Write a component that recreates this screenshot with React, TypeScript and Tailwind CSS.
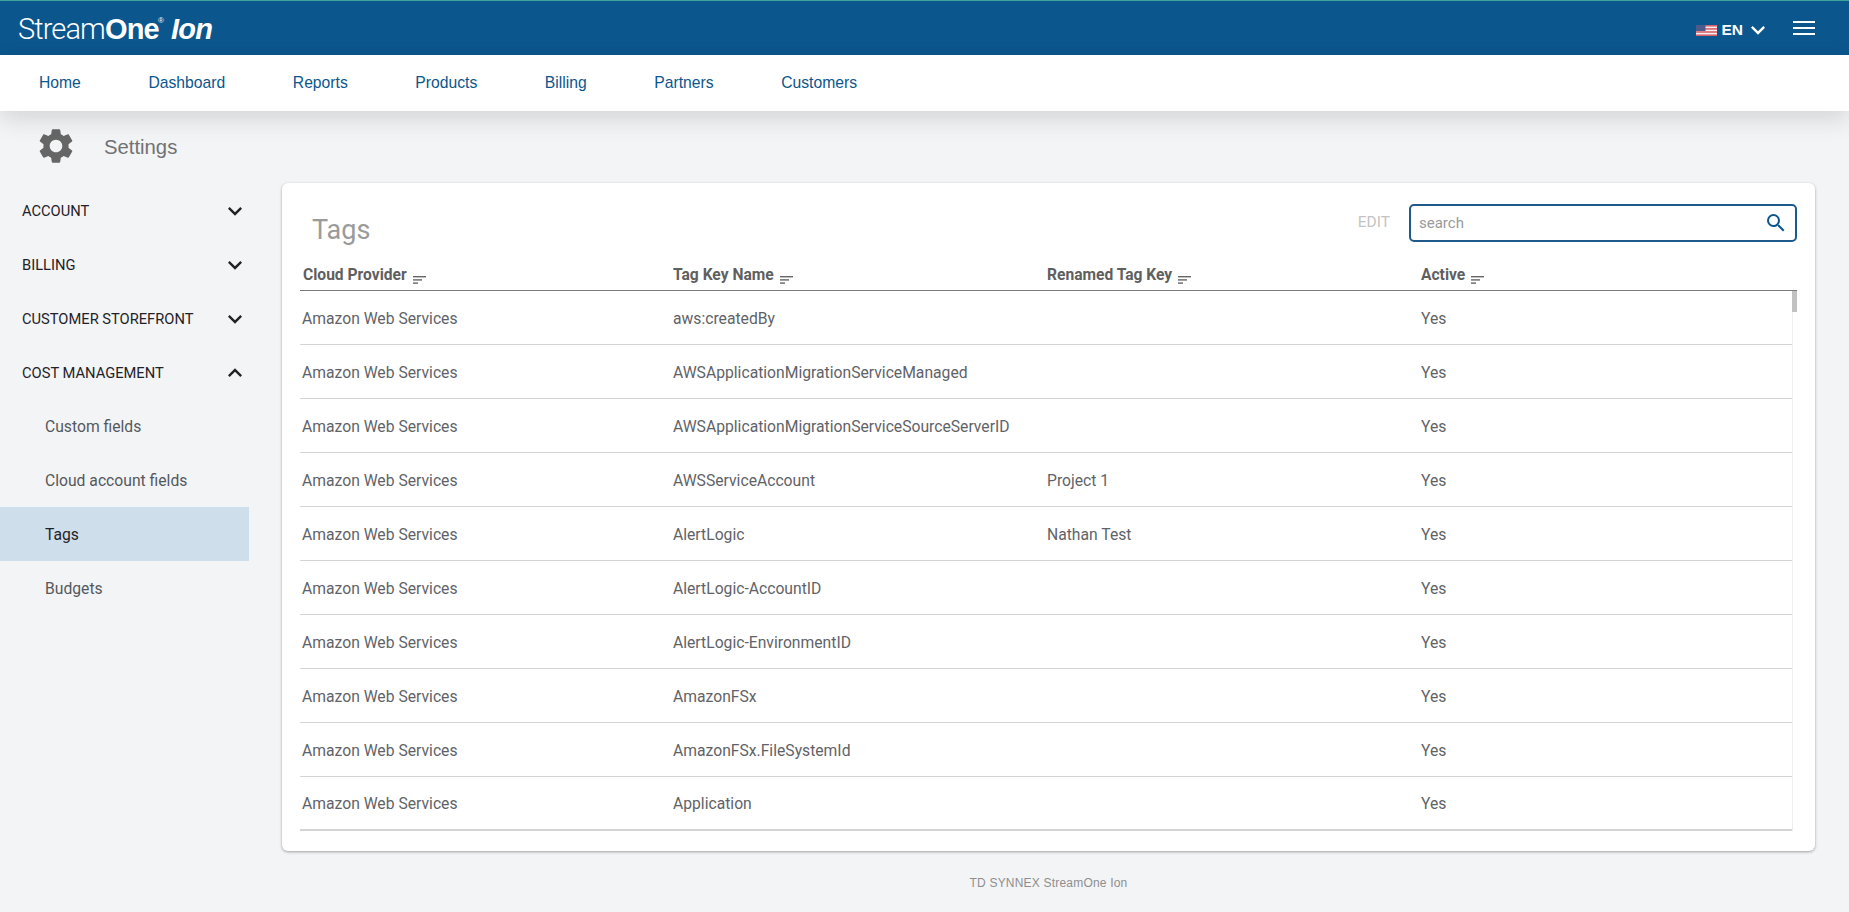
import React from "react";

const rows: [string, string, string, string][] = [
  ["Amazon Web Services", "aws:createdBy", "", "Yes"],
  ["Amazon Web Services", "AWSApplicationMigrationServiceManaged", "", "Yes"],
  ["Amazon Web Services", "AWSApplicationMigrationServiceSourceServerID", "", "Yes"],
  ["Amazon Web Services", "AWSServiceAccount", "Project 1", "Yes"],
  ["Amazon Web Services", "AlertLogic", "Nathan Test", "Yes"],
  ["Amazon Web Services", "AlertLogic-AccountID", "", "Yes"],
  ["Amazon Web Services", "AlertLogic-EnvironmentID", "", "Yes"],
  ["Amazon Web Services", "AmazonFSx", "", "Yes"],
  ["Amazon Web Services", "AmazonFSx.FileSystemId", "", "Yes"],
  ["Amazon Web Services", "Application", "", "Yes"],
];

function SortIcon() {
  return (
    <svg width="14" height="9" viewBox="0 0 14 9" className="ml-[6px] mt-[12px] shrink-0">
      <rect x="0" y="0" width="13" height="1.4" fill="#666" />
      <rect x="0" y="3.2" width="9" height="1.4" fill="#666" />
      <rect x="0" y="6.4" width="5" height="1.4" fill="#666" />
    </svg>
  );
}

function Flag() {
  return (
    <svg width="21" height="11" viewBox="0 0 21 11" className="shrink-0">
      <rect width="21" height="11" fill="#f4f0f0" />
      <rect y="0" width="21" height="1.6" fill="#d9606c" />
      <rect y="3.1" width="21" height="1.6" fill="#d9606c" />
      <rect y="6.2" width="21" height="1.6" fill="#d9606c" />
      <rect y="9.4" width="21" height="1.6" fill="#d9606c" />
      <rect width="9.5" height="6" fill="#4f5a8c" />
    </svg>
  );
}

function Expand({ up, className }: { up?: boolean; className: string }) {
  return (
    <svg width="28" height="28" viewBox="0 0 24 24" fill="currentColor" className={`shrink-0 ${className}`}>
      <path d={up ? "M12 8l-6 6 1.41 1.41L12 10.83l4.59 4.58L18 14z" : "M16.59 8.59L12 13.17 7.41 8.59 6 10l6 6 6-6z"} />
    </svg>
  );
}

function Head({ label, className }: { label: string; className: string }) {
  return (
    <div className={`flex items-center font-bold text-[15.6px] leading-[20px] text-[#5f5f5f] ${className}`}>
      <span>{label}</span>
      <SortIcon />
    </div>
  );
}

function Section({ label, open }: { label: string; open?: boolean }) {
  return (
    <div className="h-[54px] flex items-center justify-between pt-[2px] pl-[22px] w-[249px] text-[14.7px] text-[#1f2328]">
      <span>{label}</span>
      <Expand up={open} className="text-[#222]" />
    </div>
  );
}

function Sub({ label, active }: { label: string; active?: boolean }) {
  return (
    <div className={`h-[54px] flex items-center pt-[2px] pl-[45px] w-[249px] text-[15.7px] ${active ? "bg-[#cfdeeb] text-[#1f2328]" : "text-[#55595e]"}`}>
      {label}
    </div>
  );
}

export default function App() {
  return (
    <div className="h-[912px] w-full overflow-hidden bg-[#f3f4f6] font-['Roboto',sans-serif] flex flex-col">
      <header className="h-[55px] shrink-0 bg-[#0b568d] border-t border-[#3fa39b] flex items-center justify-between pl-[18px] pr-[34px] text-white">
        <div className="flex items-baseline mt-[2px] text-[29px] leading-none tracking-[-0.8px] font-['Liberation_Sans',sans-serif]">
          <span className="font-['Roboto',sans-serif] font-light tracking-[-0.9px]">Stream</span>
          <span className="font-bold">One</span>
          <span className="text-[8px] self-start mt-[2px] ml-[-1px] font-normal">®</span>
          <span className="font-bold italic ml-[8px]">Ion</span>
        </div>
        <div className="flex items-center">
          <div className="flex items-center mt-[4px]">
            <Flag />
            <span className="ml-[4px] text-[15.5px] font-bold font-['Liberation_Sans',sans-serif]">EN</span>
            <Expand className="ml-[1px] text-white" />
          </div>
          <div className="ml-[21px] flex flex-col gap-[4px]">
            <div className="h-[2px] w-[22px] bg-white" />
            <div className="h-[2px] w-[22px] bg-white" />
            <div className="h-[2px] w-[22px] bg-white" />
          </div>
        </div>
      </header>
      <nav className="h-[56px] shrink-0 bg-white flex items-center pl-[39px] gap-[67.6px] text-[15.7px] text-[#0b568d] font-['Liberation_Sans',sans-serif] shadow-[0_8px_24px_rgba(0,0,0,0.13)] relative">
        {["Home", "Dashboard", "Reports", "Products", "Billing", "Partners", "Customers"].map((n) => (
          <span key={n}>{n}</span>
        ))}
      </nav>
      <div className="h-[70px] shrink-0 flex items-center pl-[35px]">
        <svg width="42" height="42" viewBox="0 0 24 24" fill="#666" className="shrink-0">
          <path d="M19.14 12.94c.04-.3.06-.61.06-.94 0-.32-.02-.64-.07-.94l2.03-1.58c.18-.14.23-.41.12-.61l-1.92-3.32c-.12-.22-.37-.29-.59-.22l-2.39.96c-.5-.38-1.03-.7-1.62-.94l-.36-2.54c-.04-.24-.24-.41-.48-.41h-3.84c-.24 0-.43.17-.47.41l-.36 2.54c-.59.24-1.13.57-1.62.94l-2.39-.96c-.22-.08-.47 0-.59.22L2.74 8.87c-.12.21-.08.47.12.61l2.03 1.58c-.05.3-.09.63-.09.94s.02.64.07.94l-2.03 1.58c-.18.14-.23.41-.12.61l1.92 3.32c.12.22.37.29.59.22l2.39-.96c.5.38 1.03.7 1.62.94l.36 2.54c.05.24.24.41.48.41h3.84c.24 0 .44-.17.47-.41l.36-2.54c.59-.24 1.13-.56 1.62-.94l2.39.96c.22.08.47 0 .59-.22l1.92-3.32c.12-.22.07-.47-.12-.61l-2.01-1.58zM12 15.6c-1.98 0-3.6-1.62-3.6-3.6s1.62-3.6 3.6-3.6 3.6 1.62 3.6 3.6-1.62 3.6-3.6 3.6z" />
        </svg>
        <span className="ml-[27px] text-[20.3px] text-[#727272] font-['Liberation_Sans',sans-serif] mt-[2px]">Settings</span>
      </div>
      <div className="flex flex-1 min-h-0">
        <aside className="w-[249px] shrink-0 pt-[2px]">
          <Section label="ACCOUNT" />
          <Section label="BILLING" />
          <Section label="CUSTOMER STOREFRONT" />
          <Section label="COST MANAGEMENT" open />
          <Sub label="Custom fields" />
          <Sub label="Cloud account fields" />
          <Sub label="Tags" active />
          <Sub label="Budgets" />
        </aside>
        <div className="flex-1 min-w-0 flex flex-col pl-[33px] pr-[34px] pt-[2px]">
          <main className="h-[668px] bg-white rounded-[6px] shadow-[0_1px_3px_rgba(0,0,0,0.35)] pl-[18px] pr-[18px] pt-[22px] flex flex-col">
            <div className="h-[32px] shrink-0 flex items-start justify-between">
              <h1 className="ml-[12px] mt-[9px] text-[27px] leading-[32px] text-[#9a9a9a] font-normal">Tags</h1>
              <div className="flex items-center mt-[-1px]">
                <span className="text-[15.5px] text-[#c4c4c4] mr-[19px]">EDIT</span>
                <div className="w-[388px] h-[38px] rounded-[5px] border-2 border-[#1f5a8c] flex items-center justify-between pl-[8px] pr-[7px]">
                  <span className="text-[15px] text-[#9a9a9a]">search</span>
                  <svg width="24" height="24" viewBox="0 0 24 24" fill="#0b568d" className="shrink-0">
                    <path d="M15.5 14h-.79l-.28-.27A6.471 6.471 0 0 0 16 9.5 6.5 6.5 0 1 0 9.5 16c1.61 0 3.09-.59 4.23-1.57l.27.28v.79l5 4.99L20.49 19l-4.99-5zm-6 0C7.01 14 5 11.99 5 9.5S7.01 5 9.5 5 14 7.01 14 9.5 11.99 14 9.5 14z" />
                  </svg>
                </div>
              </div>
            </div>
            <div className="h-[54px] shrink-0 flex items-end pb-[5px] border-b border-[#7a7a7a]">
              <Head label="Cloud Provider" className="w-[373px] pl-[3px]" />
              <Head label="Tag Key Name" className="w-[374px]" />
              <Head label="Renamed Tag Key" className="w-[374px]" />
              <Head label="Active" className="flex-1" />
            </div>
            <div className="flex-1 min-h-0 flex relative">
              <div className="flex-1 min-w-0 self-start">
                {rows.map((r, i) => (
                  <div key={r[1]} className={`h-[54px] flex items-center pt-[2px] text-[15.7px] text-[#5f6368] border-b ${i === rows.length - 1 ? "border-b-2 border-[#d4d4d4]" : "border-[#d4d4d4]"}`}>
                    <div className="w-[373px] pl-[2px]">{r[0]}</div>
                    <div className="w-[374px] whitespace-nowrap">{r[1]}</div>
                    <div className="w-[374px]">{r[2]}</div>
                    <div className="flex-1">{r[3]}</div>
                  </div>
                ))}
              </div>
              <div className="w-[5px] h-[540px] shrink-0 border-l border-[#eeeeee]">
                <div className="h-[21px] w-[5px] ml-[-1px] bg-[#c1c1c1]" />
              </div>
            </div>
          </main>
          <div className="text-center text-[12px] text-[#8e8e8e] mt-[23px] font-['Liberation_Sans',sans-serif] tracking-[0.2px]">TD SYNNEX StreamOne Ion</div>
        </div>
      </div>
    </div>
  );
}
